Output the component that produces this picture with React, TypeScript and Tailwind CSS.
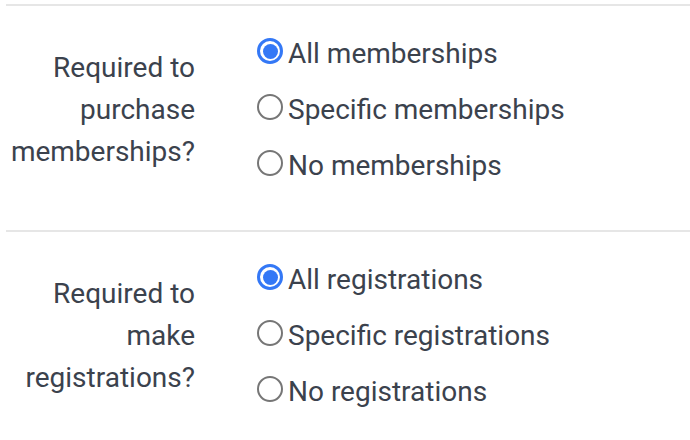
import React from "react";

function Radio({ checked }: { checked: boolean }) {
  return checked ? (
    <span className="flex h-[26px] w-[26px] shrink-0 items-center justify-center rounded-full border-[3px] border-[#3478f6] bg-white">
      <span className="h-[15px] w-[15px] rounded-full bg-[#3478f6]" />
    </span>
  ) : (
    <span className="h-[26px] w-[26px] shrink-0 rounded-full border-2 border-[#767676] bg-white" />
  );
}

function Section({ label, options }: { label: string[]; options: string[] }) {
  return (
    <div className="ml-[6px] flex border-t-2 border-[#e6e6e6] pt-[17px] pb-[39px]">
      <div className="mt-[24px] w-[189px] text-right text-[28px] leading-[42px] text-[#3b424d]">
        {label.map((l) => (
          <div key={l}>{l}</div>
        ))}
      </div>
      <div className="ml-[62px] flex flex-col">
        {options.map((o, i) => (
          <div key={o} className="flex h-[56px] items-center gap-[5px]">
            <Radio checked={i === 0} />
            <span className="pt-[5px] text-[28px] leading-[34px] text-[#3b424d]">{o}</span>
          </div>
        ))}
      </div>
    </div>
  );
}

export default function App() {
  return (
    <div
      className="h-[440px] w-[690px] overflow-hidden bg-white pt-[4px]"
      style={{ fontFamily: "Roboto, sans-serif" }}
    >
      <Section
        label={["Required to", "purchase", "memberships?"]}
        options={["All memberships", "Specific memberships", "No memberships"]}
      />
      <Section
        label={["Required to", "make", "registrations?"]}
        options={["All registrations", "Specific registrations", "No registrations"]}
      />
    </div>
  );
}
